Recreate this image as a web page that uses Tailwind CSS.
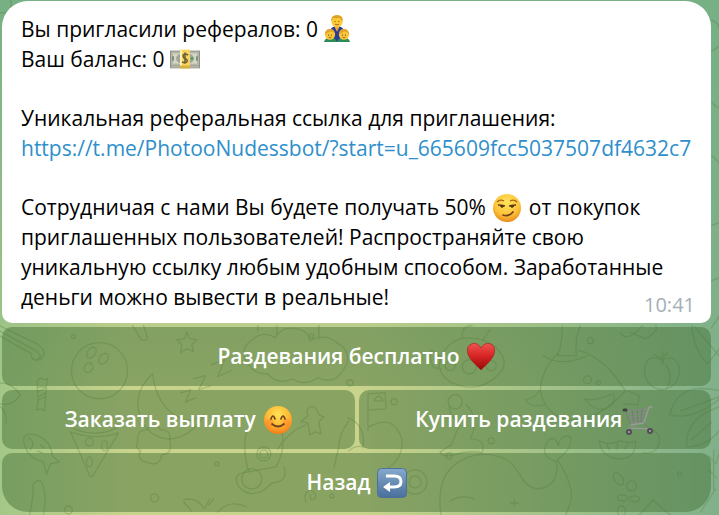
<!DOCTYPE html>
<html lang="ru">
<head>
  <meta charset="UTF-8" />
  <meta name="viewport" content="width=device-width, initial-scale=1.0" />
  <title>Реферальная программа</title>
  <script src="https://cdn.jsdelivr.net/npm/@tailwindcss/browser@4"></script>
</head>
<body class="relative min-h-screen overflow-x-hidden bg-[linear-gradient(90deg,#a4c787_0%,#c8d38b_18%,#c8d38b_50%,#a4c389_75%,#80b08a_100%)] font-['Open_Sans','Noto_Sans',sans-serif]">

  <!-- wallpaper -->
  <div class="absolute inset-0 bg-[linear-gradient(180deg,#76b084_0%,#76b08400_75%)]"></div>
  <svg class="absolute inset-0 h-full w-full" viewBox="0 0 719 515" preserveAspectRatio="xMidYMid slice" fill="none" stroke="#4f7c35" stroke-opacity=".3" stroke-width="1.3" stroke-linecap="round" stroke-linejoin="round" aria-hidden="true">
    <!-- candy cane, bowling ball, star -->
    <path d="M0 330 36 350q8 5 3 8t-5-1M0 335l32 18q-1 5 3 6 7 2 10-6 0-5-6-9L0 325"/>
    <circle cx="100" cy="370" r="28"/><circle cx="74" cy="336" r="2"/>
    <ellipse cx="92" cy="352" rx="4" ry="6" transform="rotate(35 92 352)"/><ellipse cx="104" cy="358" rx="4" ry="6" transform="rotate(40 104 358)"/><ellipse cx="89" cy="367" rx="4" ry="5" transform="rotate(35 89 367)"/>
    <path d="m187 331 3 7 7 1-5 5 2 7-7-3-6 4 1-8-5-5 8-1zM133 325l8 13q5 4 7-1l-4-12"/>
    <!-- candy, moon, zzz, cloud -->
    <path d="m38 380 3-3 3 2 4-1-1 8-1 12-1 12-4-2-4 1 2-9-1-10zM38 386h8m-8 5 9-4m-8 9 7-4m-7 7 7-3"/>
    <path d="M153 373q-18 17-14 37 5 24 28 28 22 1 38-24-15 9-25 3-23-11-27-44z"/>
    <path d="m181 392 10-3-5 12 10-4m-2-19 12-3-7 14 12-4m1-21 13-5-7 17 13-6"/>
    <path d="M250 365q-12-14 0-24 13-12 25-4 8-12 20-9 13 1 15 12 15-8 27 2 17 10 7 26-9 17-26 9-14 9-25 1-16 7-25-5-12 1-18-8zM258 330v-5m19 10v-10m42 13v-13"/>
    <circle cx="312" cy="335" r="2"/><circle cx="350" cy="382" r="3"/>
    <!-- fish, pizza, smoke -->
    <path d="M25 436q4-5 14-1 13 6 14 20l7 6-9 2-4 10-3-12q-15-4-18-15-3-6-1-10zM29 437q8 4 2 12m10-5 4 3m-7 3 5 2"/>
    <path d="m71 431 19 43q2 4 4 0l25-42M71 431q25 9 48 1m-45-4q24 9 43-1"/><circle cx="90" cy="441" r="4"/><ellipse cx="105" cy="445" rx="3" ry="5"/><ellipse cx="90" cy="461" rx="3" ry="5"/>
    <path d="M138 441q-1-12 9-12 7-10 14 0 11 0 9 10 4 14-8 15-2 12-13 8-13-3-8-12-6-3-3-9z"/>
    <!-- rocket and gingerbread man -->
    <path d="M247 430q-5 18 2 41l27-5q10-16 6-38M249 471q-18 1-10 15 15 15 33-4 17-1 12-16M278 448q10-17 28-24"/>
    <circle cx="264" cy="453" r="7"/><circle cx="264" cy="453" r="4"/><circle cx="252" cy="478" r="10"/>
    <path d="M307 409q5-7 10 0l2 5 5 2-5 5 2 12-6-2-5 3-2-12-7-1 7-6z"/>
    <circle cx="217" cy="463" r="2"/><circle cx="155" cy="497" r="4"/><circle cx="69" cy="509" r="4"/><circle cx="332" cy="495" r="2"/>
    <path d="M30 515q4-19 4-32 10-12 12 16l-2 16M184 499q12-4 21 9l5-10m-18 12-8-9m25 3 5-6m4 13q12-13 29-5M306 501q-3-10 5-12 9 6 2 10-4 0-2-5"/>
    <!-- pig -->
    <path d="M439 366q2-21 21-28 23-3 36 9 14 14 3 26-21 22-49 8-9-5-11-15zM439 355l-8-6q-3 9 3 18l7 1M462 337q-1-12 10-12m10 15 8-11"/><circle cx="469" cy="366" r="7"/><circle cx="450" cy="365" r="5"/><circle cx="491" cy="365" r="5"/>
    <!-- bottle and juggling animal -->
    <path d="M562 325q0 18-5 30h19q-2-16 4-30m-37 30q18 12 44 0m-29-3q-17 17-18 37 4 25 28 30 30 1 57-29l-10-14q-18-22-37-26M540 389q-6 9-15 10 5 8 19 5M627 390l12 5-2 9-14-1"/>
    <circle cx="590" cy="340" r="3"/><circle cx="587" cy="379" r="4"/><circle cx="598" cy="382" r="2"/><path d="M584 398q11 3 28-5 6 7-6 15-12 3-22-10z"/>
    <!-- peach, leaves, moustache -->
    <path d="M661 359q-15-7-17 10 0 17 17 20 17-2 18-20-2-16-18-10zm1-8q1 19-1 8m-7-5 7 4 6-6m-2 12q9 13 0 25M620 332q6 11 22-7m-12 7 15 6q14-8 10-13"/>
    <path d="M719 390q-42-10-50 24 23 6 50-16m0 8q-35 11-33 40 22-1 33-17M680 410l39-14m-28 43 20-18M691 325q3 27 16 38l12-15m-25-22 25 30M711 327l8-12M708 455l7 8 4-12m-11 18 8 8m-3-28v40"/>
    <!-- flag, tyre, mug -->
    <path d="M368 430v-37l17-1 1 16-17 1m5-9q5-9 9 0z"/><circle cx="394" cy="401" r="3"/><circle cx="455" cy="401" r="7"/>
    <path d="M349 420q-10 13-10 25l-5 22m35-41q25-14 33 13 1 20-16 29M348 417q18 7 15 30m-14 3q6-6 14-4"/>
    <path d="M449 406q1 13 12 15-5 10-10 23l-11 7q1 6 14 3 14-5 28-2 4-14-12-14 10-20-4-34"/><circle cx="491" cy="440" r="3"/><circle cx="449" cy="455" r="3"/>
    <!-- whale -->
    <path d="M441 515q-5-34 11-49 23-20 53-8 8 5 14 15 11 20 27 13 13-6 10-25-15-5-11-16 3-9 10-7l3 7q2-12 12-9 3 11-13 23 17 25 13 43l-5 13M450 500q12-7 24-2"/><circle cx="415" cy="481" r="6"/><circle cx="415" cy="481" r="12"/><path d="M510 502h8m-4-3v6"/>
    <!-- melon, beans, tent -->
    <path d="M599 440q9 5 21 0 12 3 15 0 1 18-17 18-18-2-19-18zm40-11q16-4 20 8 0 17-17 15M606 443l3 6m8-6v6m10-6-3 5"/>
    <ellipse cx="618" cy="478" rx="4" ry="7" transform="rotate(-35 618 478)"/><circle cx="631" cy="485" r="5"/><ellipse cx="622" cy="497" rx="5" ry="3"/><ellipse cx="634" cy="498" rx="5" ry="3"/><ellipse cx="621" cy="510" rx="4" ry="5"/><circle cx="679" cy="473" r="2"/>
    <path d="m638 515 14-16 19 16m29-4 15-23"/>
    <!-- outer edge shapes -->
    <circle cx="3" cy="4" r="9"/><path d="M0 382q13 0 21 12-8 12-21 9M0 405q7 5 7 17M711 20q8 3 8 11m-8 20 8-5m-8 56q6 7 8 5m-8 48 8 8m-8 62 8-3m-8 58 8-3"/>
  </svg>

  <main class="relative flex flex-col gap-1 pt-px pr-2 pb-1 pl-0.5">
    <article class="relative rounded-t-[26px] rounded-b-[10px] bg-white px-[19px] pt-[13px] pb-[11px] text-[21px] leading-[30px] text-black">
      <p>Вы пригласили рефералов: 0
        <svg class="inline-block h-[28px] w-[28px] align-[-6px]" viewBox="0 0 30 30" role="img" aria-label="семья">
          <path d="M8 17q0-5 7-5t7 5v12H8z" fill="#273c9c"/>
          <path d="M1 29q1-5 7-5t7 5zm14 0q1-5 7-5t7 5z" fill="#2c8b57"/>
          <path d="m12 12 3 6 3-6z" fill="#e9ac2d"/>
          <circle cx="15" cy="7" r="6" fill="#f9c936"/>
          <path d="M9 7q-1-7 6-7t6 7q-2-4-4-4-4 1-6 0-1 1-2 4" fill="#dda022"/>
          <circle cx="7.500" cy="21" r="5.500" fill="#f8c638"/><circle cx="22.500" cy="21" r="5.500" fill="#f8c638"/>
          <path d="M2 21q0-6 5.500-6t5.500 6q-2-4-5.500-3T2 21m15 0q0-6 5.500-6t5.500 6q-2-4-5.500-3T17 21" fill="#e2a42a"/>
          <path d="M12.500 7h1m3 0h1M5.500 21.500h1m2 0h1m11 0h1m2 0h1" stroke="#76501f" stroke-width="1.200"/>
          <path d="M13 10q2 1 4 0M6 24q1.500 1 3 0m12 0q1.500 1 3 0" fill="none" stroke="#a56120"/>
        </svg>
      </p>
      <p>Ваш баланс: 0
        <svg class="inline-block h-[28px] w-[30px] align-[-6px]" viewBox="0 0 30 30" preserveAspectRatio="none" role="img" aria-label="деньги">
          <path d="M0 6h30v19H0z" fill="#8f9186"/>
          <path d="M1 7h28v15H1z" fill="#b5b8a8"/>
          <path d="M3 9h24v11H3z" fill="#d3d5c5"/>
          <ellipse cx="15" cy="14.500" rx="9" ry="6" fill="#a1a698"/>
          <path d="M3 12v5m24-5v5" stroke="#85907c" stroke-width="2"/>
          <circle cx="22" cy="14.500" r="1.500" fill="#4aa16d"/>
          <path d="M1 23.500h28" stroke="#d0d0c5"/>
          <path d="M10 5h10v20H10z" fill="#f7d45d"/>
          <path d="M10 5h2v20h-2z" fill="#fff0a5"/>
          <path d="M10 22h10v3H10z" fill="#d8b23f"/>
          <path d="M18 11q-2-2-4-1t0 4q4 1 3 4-2 2-5 0M15 8v12" fill="none" stroke="#695c37" stroke-width="1.500"/>
        </svg>
      </p>
      <p class="mt-[29px]">Уникальная реферальная ссылка для приглашения:</p>
      <p><a href="#" class="text-[#2f8fcb]">https://t.me/PhotooNudessbot/?start=u_665609fcc5037507df4632c7</a></p>
      <p class="mt-[29px]">Сотрудничая с нами Вы будете получать 50%
        <svg class="mx-0.5 inline-block h-[28px] w-[28px] align-[-7px]" viewBox="0 0 28 28" role="img" aria-label="ухмылка">
          <defs><radialGradient id="smirk" cx=".5" cy=".3" r=".7"><stop stop-color="#ffe45a"/><stop offset=".65" stop-color="#fdc23a"/><stop offset="1" stop-color="#e98c1d"/></radialGradient></defs>
          <circle cx="14" cy="14" r="14" fill="url(#smirk)"/>
          <path d="M4 8q3-3 7-1m6 0q4-2 7 1" fill="none" stroke="#a76417" stroke-width="1.300"/>
          <path d="M5 11q4 0 7 1m4 0q4-1 7-1" fill="none" stroke="#69401a" stroke-width="1.500"/>
          <path d="M7 12h4q-1 2-3 1m9-1h4q-1 2-3 1" fill="#5b3719" stroke="#5b3719"/>
          <path d="M10 21q6 2 10-3" fill="none" stroke="#70401a" stroke-width="1.700" stroke-linecap="round"/>
        </svg>
        от покупок приглашенных пользователей! Распространяйте свою уникальную ссылку любым удобным способом. Заработанные деньги можно вывести в реальные!</p>
      <time class="absolute right-4 bottom-2 text-[20px] leading-[20px] text-[#a5afb8]">10:41</time>
    </article>

    <div class="grid grid-cols-2 gap-1 text-[21px] leading-[27px] font-semibold text-white">
      <button class="col-span-2 flex items-center justify-center gap-1.5 rounded-[10px] bg-[#4a743c]/50 py-4">
        Раздевания бесплатно
        <svg class="-my-1 h-[30px] w-[30px]" viewBox="0 0 30 30" aria-hidden="true">
          <defs><linearGradient id="heart" x2="0" y2="1"><stop stop-color="#ee5550"/><stop offset=".5" stop-color="#d52222"/><stop offset="1" stop-color="#920b08"/></linearGradient></defs>
          <path d="M15 6C12 0 5 0 2 5-1 14 8 21 15 28 22 21 31 14 28 5 25 0 18 0 15 6z" fill="url(#heart)" stroke="#a32520" stroke-width=".7"/>
        </svg>
      </button>
      <button class="flex items-center justify-center gap-2 rounded-[10px] bg-[#4a743c]/50 py-4">
        Заказать выплату
        <svg class="-my-1 h-[28px] w-[28px]" viewBox="0 0 28 28" aria-hidden="true">
          <defs><radialGradient id="smile" cx=".5" cy=".3" r=".7"><stop stop-color="#ffe356"/><stop offset=".55" stop-color="#fdbb35"/><stop offset="1" stop-color="#f57c18"/></radialGradient></defs>
          <circle cx="14" cy="14" r="14" fill="url(#smile)"/>
          <circle cx="6" cy="17" r="4" fill="#ff882e" opacity=".5"/><circle cx="22" cy="17" r="4" fill="#ff882e" opacity=".5"/>
          <path d="M7 13q2-6 4 0m6 0q2-6 4 0M8 18q6 5 12 0" fill="none" stroke="#71401a" stroke-width="1.700" stroke-linecap="round"/>
        </svg>
      </button>
      <button class="flex items-center justify-center rounded-[10px] bg-[#4a743c]/50 py-4">
        Купить раздевания
        <svg class="-my-1 h-[30px] w-[32px]" viewBox="0 0 32 30" fill="none" stroke="#858b83" stroke-linecap="round" aria-hidden="true">
          <path d="M4 6 25 4M5 9l19-1M6 12l18-1M7 15l16-1M8 18l14-1" stroke-width="1.300"/>
          <path d="m4 6 4 12m2-13 2 12m3-12 1 12m4-13-1 13" stroke="#747b73"/>
          <path d="M30 2h-3l-5 16-13 2-2 3 20 1" stroke="#969b94" stroke-width="1.500"/>
          <path d="m22 18 5 6M8 21v4" stroke="#777d77"/>
          <path d="M2 5h2" stroke="#39443d" stroke-width="3"/>
          <circle cx="7" cy="27" r="2" fill="#aaa" stroke="#514e56" stroke-width="2"/><circle cx="28" cy="26" r="2" fill="#aaa" stroke="#514e56" stroke-width="2"/>
        </svg>
      </button>
      <button class="col-span-2 flex items-center justify-center gap-1.5 rounded-t-[10px] rounded-b-[26px] bg-[#4a743c]/50 py-4">
        Назад
        <svg class="-my-1 h-[30px] w-[30px]" viewBox="0 0 30 30" aria-hidden="true">
          <defs><linearGradient id="back" x2="0" y2="1"><stop stop-color="#86a9cc"/><stop offset="1" stop-color="#496f9c"/></linearGradient></defs>
          <rect x=".5" y=".5" width="29" height="29" rx="4" fill="url(#back)" stroke="#4e719a"/>
          <path d="M9 8h8q7 0 7 5.500T17 19h-5" fill="none" stroke="#fff" stroke-width="3"/>
          <path d="m6 19 7-5v10z" fill="#fff"/>
        </svg>
      </button>
    </div>
  </main>
</body>
</html>
